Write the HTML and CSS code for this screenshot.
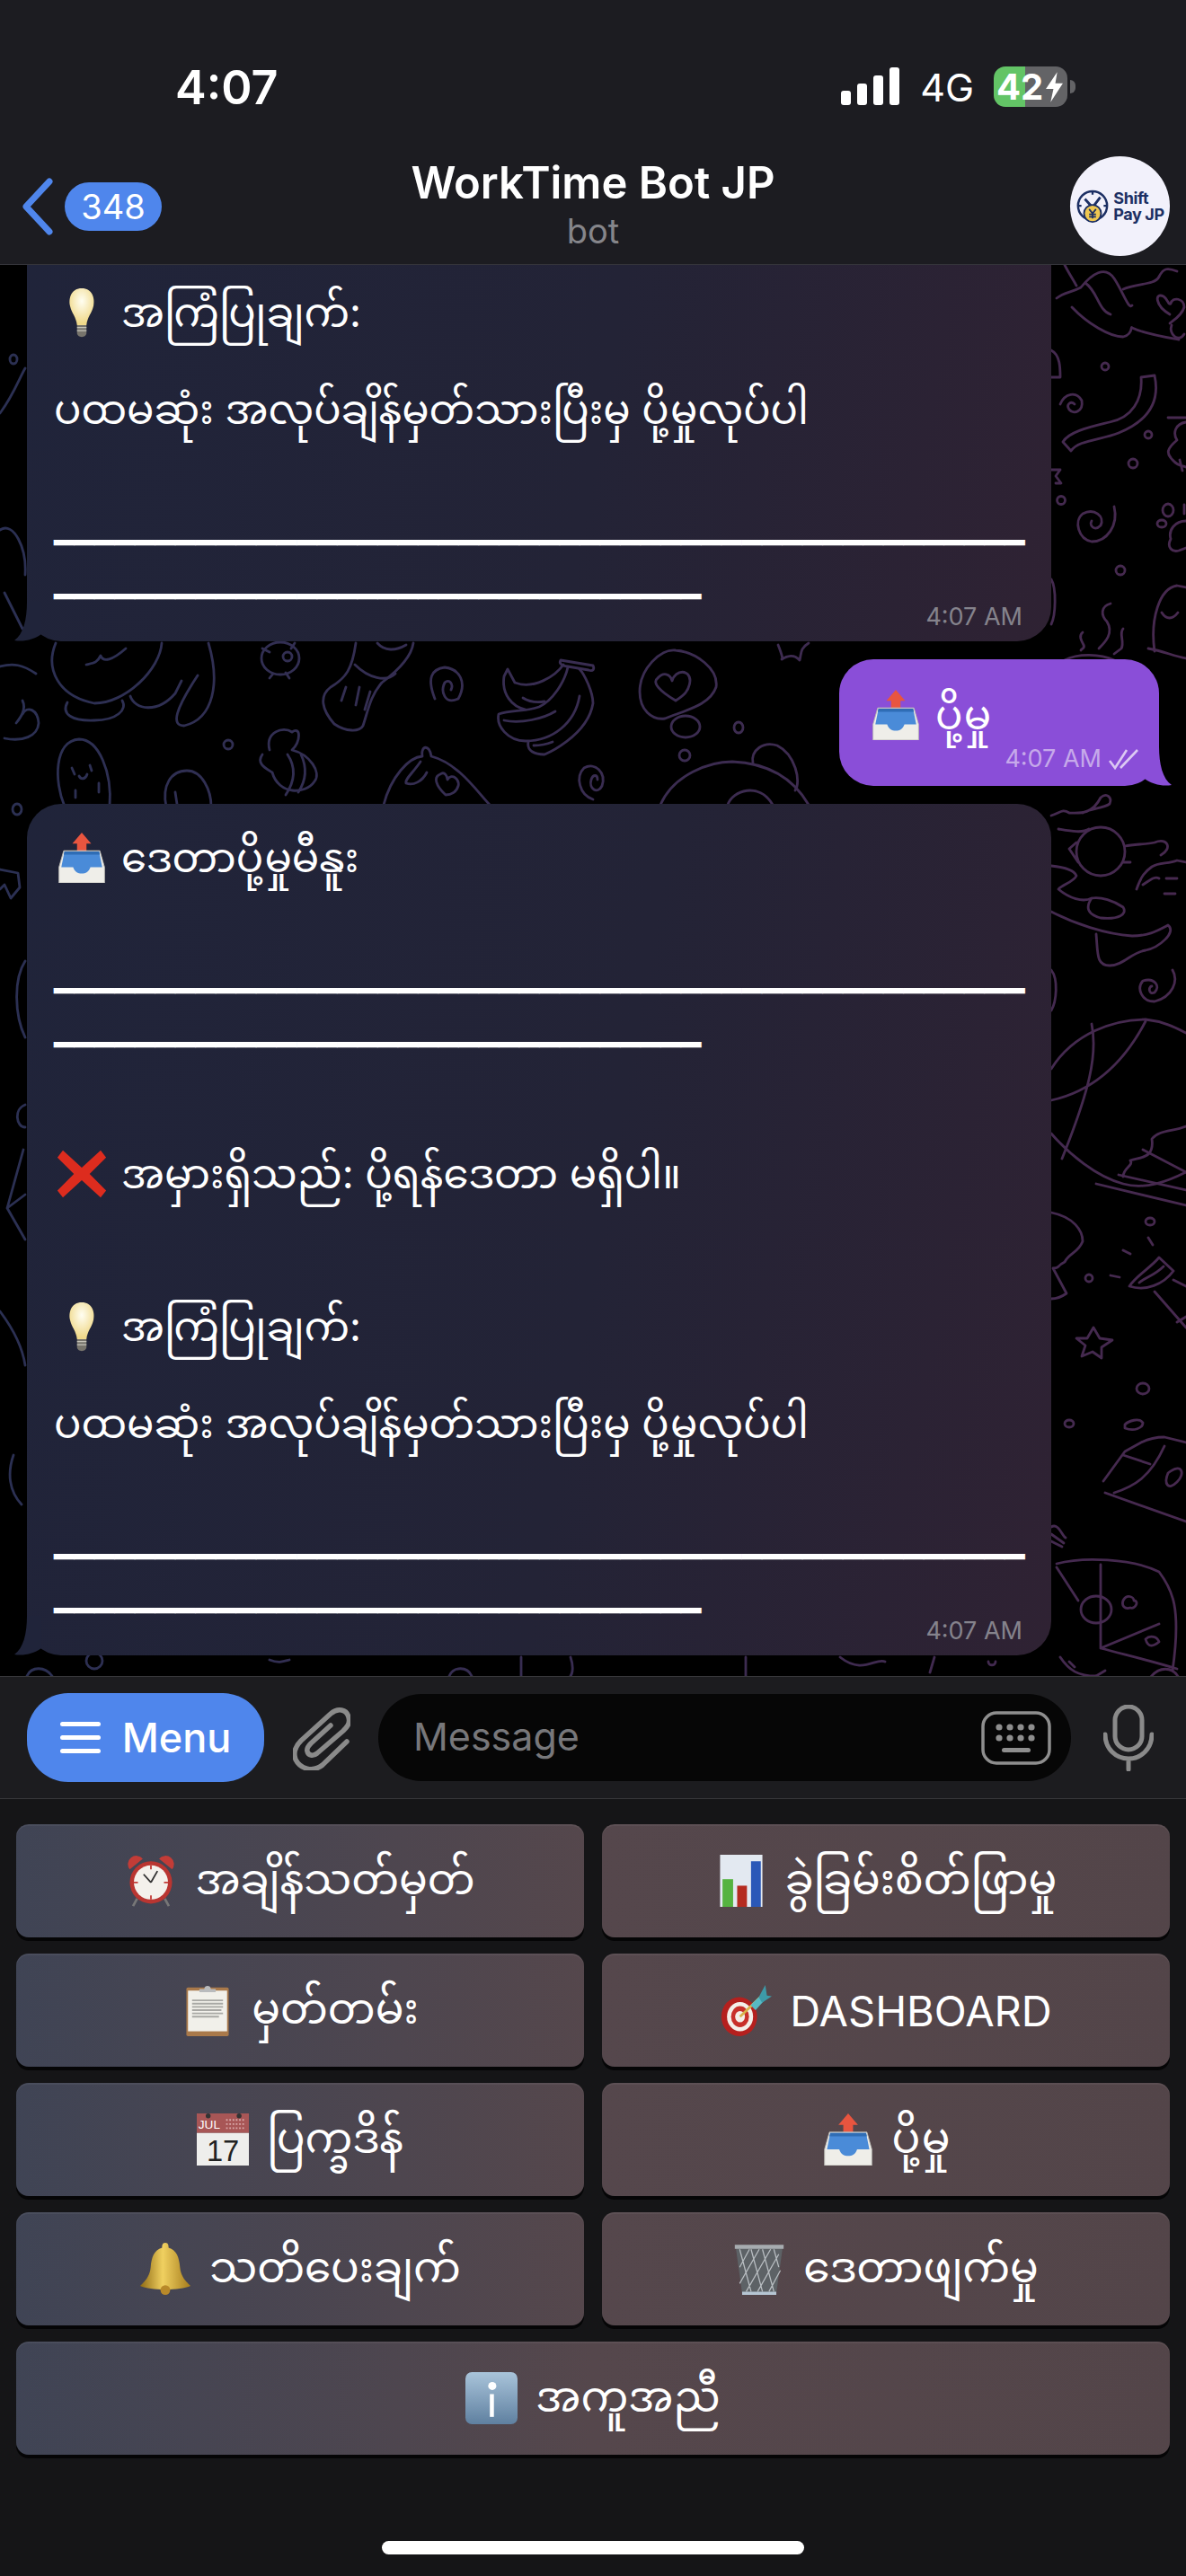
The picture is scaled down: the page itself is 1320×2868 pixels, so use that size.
FILE: index.html
```html
<!DOCTYPE html>
<html lang="my">
<head>
  <meta charset="UTF-8" />
  <meta name="viewport" content="width=device-width, initial-scale=1.0" />
  <title>WorkTime Bot JP</title>
  <link rel="stylesheet" href="styles.css">
</head>
<body>
  <!-- emoji drawn once, reused with <use> -->
  <svg class="defs" width="0" height="0">
    <defs>
      <linearGradient id="doodle" gradientUnits="userSpaceOnUse" x1="0" y1="0" x2="1320" y2="0">
        <stop offset="0" stop-color="#2b3053"/>
        <stop offset="1" stop-color="#47294f"/>
      </linearGradient>
      <radialGradient id="bulbGlow" cx="0.5" cy="0.35" r="0.6">
        <stop offset="0" stop-color="#fffef2"/>
        <stop offset="1" stop-color="#f0d98a"/>
      </radialGradient>
      <linearGradient id="bellGold" x1="0" y1="0" x2="1" y2="0">
        <stop offset="0" stop-color="#8f6a14"/>
        <stop offset="0.45" stop-color="#f0d060"/>
        <stop offset="1" stop-color="#a67c1c"/>
      </linearGradient>
      <linearGradient id="infoBlue" x1="0" y1="0" x2="0" y2="1">
        <stop offset="0" stop-color="#a9c4da"/>
        <stop offset="1" stop-color="#5f80a0"/>
      </linearGradient>
      <symbol id="inbox" viewBox="0 0 64 64">
        <path d="M32 0 44 14H38V25H26V14H20Z" fill="#e8553f"/>
        <path d="M3 44 9 23H55L61 44V64H3Z" fill="#efeee9" stroke="#b9b9b4"/>
        <path d="M10 24H54L58 44H43C41 50 37 52 32 52S23 50 21 44H6Z" fill="#4a8bd8"/>
        <path d="M10 24H54L55 28H9Z" fill="#2f6db5"/>
      </symbol>
      <symbol id="bulb" viewBox="0 0 64 64">
        <path d="M32 1C19 1 15 13 17 23 19 33 25 37 26 48H38C39 37 45 33 47 23 49 13 45 1 32 1Z" fill="url(#bulbGlow)"/>
        <path d="M26 48H38V58C38 61 35 63 32 63S26 61 26 58Z" fill="#77746c"/>
        <path d="M26 51H38M26 55H38" stroke="#c8c5bb" stroke-width="1.5"/>
      </symbol>
      <symbol id="cross" viewBox="0 0 64 64">
        <path d="M8 2 32 24 56 2 63 11 42 32 63 53 56 62 32 40 8 62 1 53 22 32 1 11Z" fill="#dd2c1e"/>
      </symbol>
      <symbol id="clock" viewBox="0 0 64 64">
        <path d="M6 18A10 10 0 0 1 22 5ZM58 18A10 10 0 0 0 42 5Z" fill="#c33c37"/>
        <path d="M15 54 10 63M49 54 54 63" stroke="#777" stroke-width="3"/>
        <circle cx="32" cy="34" r="26" fill="#b93531"/>
        <circle cx="32" cy="34" r="21" fill="#f4f1ec"/>
        <path d="M32 13V18M32 50V55M11 34H16M48 34H53" stroke="#c33c37" stroke-width="2"/>
        <path d="M32 34 23 24M32 34 40 20" stroke="#333" stroke-width="2" fill="none"/>
      </symbol>
      <symbol id="chart" viewBox="0 0 64 64">
        <rect x="6" y="0" width="52" height="64" fill="#e3e9f1"/>
        <rect x="9" y="30" width="13" height="34" fill="#55b340"/>
        <rect x="27" y="38" width="12" height="26" fill="#b52b20"/>
        <rect x="44" y="8" width="12" height="56" fill="#2a58b8"/>
      </symbol>
      <symbol id="clipboard" viewBox="0 0 64 64">
        <rect x="6" y="4" width="52" height="60" rx="2" fill="#a9794a"/>
        <rect x="8" y="8" width="48" height="50" fill="#f1f0ea"/>
        <path d="M13 20H51M13 24H51M13 28H51M13 32H49M13 36H51M13 40H46" stroke="#a8a8a4" stroke-width="2"/>
        <path d="M22 10V6H28C28 1 36 1 36 6H42V10Z" fill="#b9bbbd"/>
      </symbol>
      <symbol id="target" viewBox="0 0 64 64">
        <ellipse cx="24" cy="40" rx="22" ry="24" fill="#b5201e"/>
        <ellipse cx="25" cy="40" rx="16" ry="18" fill="#f4efe9"/>
        <ellipse cx="25" cy="40" rx="11" ry="13" fill="#c8302a"/>
        <ellipse cx="25" cy="40" rx="6" ry="7" fill="#f4efe9"/>
        <path d="M25 40 52 14" stroke="#d8b24a" stroke-width="3"/>
        <path d="M38 26 48 16 54 21 44 32Z" fill="#57b9c4"/>
        <path d="M48 16 56 1 58 14 64 15 52 23Z" fill="#3d9aa8"/>
      </symbol>
      <symbol id="calendar" viewBox="0 0 64 64">
        <rect x="0" y="0" width="64" height="24" fill="#a85656"/>
        <rect x="0" y="24" width="64" height="40" fill="#eeeeec"/>
        <text x="2" y="19" class="cal-month">JUL</text>
        <text x="12" y="58" class="cal-day">17</text>
        <path d="M36 8H60M36 13H60M36 18H60" stroke="#d9a9a9" stroke-width="2" stroke-dasharray="2 2"/>
        <circle cx="14" cy="3" r="3" fill="#333"/>
        <circle cx="52" cy="3" r="3" fill="#333"/>
      </symbol>
      <symbol id="bell" viewBox="0 0 64 64">
        <path d="M32 0C36 0 36 4 36 6 46 9 49 18 50 30 51 42 58 48 63 53 50 59 14 59 1 53 6 48 13 42 14 30 15 18 18 9 28 6 28 4 28 0 32 0Z" fill="url(#bellGold)"/>
        <circle cx="32" cy="58" r="6" fill="#b8892a"/>
      </symbol>
      <symbol id="trash" viewBox="0 0 64 64">
        <path d="M3 4H61L53 62H11Z" fill="#5d6266"/>
        <path d="M8 8 22 60M22 8 36 60M36 8 50 60M50 8 56 30M8 30 20 8M8 50 32 8M16 60 46 8M30 60 56 14M44 60 58 34" stroke="#b9bec2" stroke-width="1.4" fill="none"/>
        <path d="M2 5H62" stroke="#a7acb0" stroke-width="5"/>
        <path d="M11 62H53" stroke="#b6c6d3" stroke-width="4"/>
      </symbol>
      <symbol id="info" viewBox="0 0 64 64">
        <rect x="0" y="0" width="64" height="64" rx="8" fill="url(#infoBlue)"/>
        <circle cx="33" cy="17" r="5" fill="#fff"/>
        <rect x="30" y="27" width="5" height="28" fill="#fff"/>
      </symbol>
    </defs>
  </svg>

  <header class="top">
    <div class="status">
      <span class="clock">4:07</span>
      <div class="status-right">
        <svg class="signal" viewBox="0 0 65 42">
          <rect x="0" y="26" width="11" height="16" rx="3"/>
          <rect x="18" y="18" width="11" height="24" rx="3"/>
          <rect x="36" y="9" width="11" height="33" rx="3"/>
          <rect x="54" y="0" width="11" height="42" rx="3"/>
        </svg>
        <span class="net">4G</span>
        <div class="battery">
          <span class="battery-level">42</span>
          <svg class="bolt" viewBox="0 0 20 32"><path d="M13 0 1 18H9L6 32 19 12H11Z"/></svg>
        </div>
        <span class="battery-nub"></span>
      </div>
    </div>
    <div class="nav">
      <div class="back">
        <svg class="chevron" viewBox="0 0 36 64"><path d="M31 4 5 32 31 60"/></svg>
        <span class="badge">348</span>
      </div>
      <div class="title-box">
        <div class="title">WorkTime Bot JP</div>
        <div class="subtitle">bot</div>
      </div>
      <div class="avatar">
        <svg class="logo-mark" viewBox="0 0 40 40">
          <circle cx="20" cy="19" r="17" fill="none" stroke="#1c2f63" stroke-width="2.6"/>
          <path d="M20 2V6M20 32V36M3 19H7M33 19H37" stroke="#1c2f63" stroke-width="2.4"/>
          <path d="M11 11 20 21 29 9" fill="none" stroke="#1c2f63" stroke-width="3"/>
          <circle cx="20" cy="28" r="10" fill="#efc750" stroke="#1c2f63" stroke-width="2"/>
          <path d="M16 23 20 28 24 23M20 28V34M16 29H24M16 32H24" fill="none" stroke="#1c2f63" stroke-width="1.8"/>
        </svg>
        <div class="logo-text">Shift<br>Pay JP</div>
      </div>
    </div>
  </header>

  <main class="chat">
    <svg class="wallpaper" viewBox="0 0 1320 1571" width="1320" height="1571">
      <g transform="translate(0 -295)" fill="none" stroke="url(#doodle)" stroke-width="2.8" stroke-linecap="round" stroke-linejoin="round">
        <!-- band between first bubble and second -->
        <path d="M0 742C15 738 25 740 40 750"/>
        <path d="M25 795C30 785 42 790 43 805 42 820 25 826 5 822M25 780C30 790 22 800 18 805"/>
        <path d="M62 716C50 745 65 775 105 783 140 783 178 745 180 716"/>
        <path d="M75 782C68 795 80 803 105 802 130 802 142 790 136 780"/>
        <path d="M145 775C150 790 175 795 195 772L202 758"/>
        <path d="M232 716C245 760 238 800 205 808 190 808 195 790 220 752"/>
        <path d="M96 740C105 738 108 738 112 730 115 738 125 735 140 722"/>
        <ellipse cx="312" cy="733" rx="21" ry="18"/>
        <circle cx="320" cy="731" r="5"/>
        <path d="M292 722 300 726M328 716 324 722M300 755 304 750M322 755 318 749"/>
        <path d="M396 716C392 745 385 755 368 765 355 775 358 790 372 806 385 815 400 815 404 808 410 790 412 775 425 760 445 745 458 730 460 716"/>
        <path d="M395 740C410 755 430 760 440 750M385 765 380 780M400 765 396 785M412 770 406 790M420 716C428 725 440 725 452 718"/>
        <path d="M484 778C475 755 480 745 495 743 512 745 520 760 510 778 495 785 490 770 495 760 500 755 505 762 502 768"/>
        <path d="M624 735 660 741C662 745 660 748 655 746L632 742C624 741 622 738 624 735Z"/>
        <path d="M627 740C618 753 594 768 573 760L565 745 561 753C558 773 570 787 585 790"/>
        <path d="M632 743C628 760 615 780 600 787 582 793 570 790 555 795 552 808 565 825 585 825 615 825 640 805 645 775"/>
        <path d="M645 745C650 750 660 770 660 783 654 820 606 840 606 840 595 840 586 836 588 826"/>
        <path d="M582 777C590 782 600 782 606 781M561 802C580 806 605 800 618 792M594 830C600 830 610 828 615 826"/>
        <path d="M752 724C775 726 800 745 797 765 790 785 765 790 740 800 725 802 712 790 712 770 712 745 735 722 752 724Z"/>
        <path d="M752 780C735 770 725 760 732 755 738 748 746 750 748 758 752 745 768 745 768 758 767 770 760 775 752 780Z"/>
        <ellipse cx="763" cy="809" rx="16" ry="12"/>
        <ellipse cx="822" cy="810" rx="5" ry="6"/>
        <ellipse cx="762" cy="841" rx="6" ry="6"/>
        <path d="M866 718C870 728 872 735 870 734 876 730 884 728 890 735 892 728 890 722 900 716"/>
        <ellipse cx="254" cy="829" rx="5" ry="5"/>
        <path d="M72 898C60 870 60 825 88 823 110 823 125 860 122 898"/>
        <path d="M80 855 83 862M100 852 102 858M88 864C90 868 95 868 97 862M84 880V888M110 872V882"/>
        <path d="M185 898C180 875 190 858 208 858 225 858 235 880 235 898M195 882 197 895"/>
        <path d="M300 835C295 815 315 808 325 815 335 808 335 825 325 835 345 840 358 860 350 870 340 885 310 885 303 860 295 855 285 850 292 840 288 830 300 835Z"/>
        <path d="M320 840C330 855 328 870 318 885M335 840C342 855 340 870 332 882"/>
        <path d="M427 896C435 865 455 843 470 842 468 830 478 828 480 842 510 850 530 880 545 896"/>
        <path d="M468 848C460 860 450 868 452 872 460 875 470 870 475 860"/>
        <path d="M496 885C485 875 482 865 490 862 495 858 498 865 498 868 503 860 512 868 510 875 508 882 502 885 496 885Z"/>
        <path d="M660 890C645 885 640 865 650 855 662 848 675 860 670 875 665 885 655 878 658 868 660 862 665 862 665 868"/>
        <path d="M735 896C750 862 790 848 815 848 860 850 885 870 900 896"/>
        <path d="M810 896C815 880 845 870 860 896"/>
        <path d="M838 850C835 835 850 825 865 830 885 840 892 870 885 880"/>
        <!-- right of the first bubble -->
        <path d="M1185 295C1190 305 1195 312 1198 318M1176 332C1185 325 1192 326 1203 320 1215 305 1230 295 1240 310 1250 325 1256 345 1260 340"/>
        <path d="M1193 342C1210 360 1235 375 1250 375 1262 372 1258 362 1260 365 1275 372 1295 375 1312 378"/>
        <path d="M1208 315C1222 325 1222 345 1236 350M1250 322C1265 315 1285 318 1290 308 1295 298 1300 298 1310 302"/>
        <path d="M1302 350C1285 340 1285 325 1295 330 1300 333 1300 340 1303 338 1305 330 1318 332 1318 342 1315 352 1304 358 1302 360M1304 362C1300 372 1312 382 1318 372"/>
        <path d="M1170 390C1180 395 1180 410 1180 420H1170"/>
        <circle cx="1230" cy="408" r="4"/>
        <path d="M1270 420 1285 418C1292 450 1275 470 1245 482 1225 490 1200 490 1192 502L1183 492C1190 480 1215 475 1235 470 1260 465 1272 445 1270 420Z"/>
        <path d="M1180 450C1185 438 1198 435 1204 446 1206 458 1195 462 1190 456 1186 450 1192 446 1196 450"/>
        <circle cx="1278" cy="484" r="4"/>
        <circle cx="1261" cy="516" r="5"/>
        <path d="M1300 465H1320M1320 470C1308 472 1305 482 1310 490 1298 500 1298 505 1305 512 1312 520 1316 518 1320 520M1313 512 1316 524"/>
        <path d="M1170 523H1180L1175 530 1181 538H1175"/>
        <circle cx="1181" cy="557" r="4.5"/>
        <path d="M1240 564C1245 585 1232 603 1215 603 1200 600 1195 580 1205 572 1218 565 1230 575 1225 585 1218 592 1212 585 1215 580"/>
        <ellipse cx="1300" cy="568" rx="6" ry="7"/>
        <ellipse cx="1293" cy="583" rx="5" ry="4"/>
        <path d="M1320 580C1308 580 1300 590 1303 600 1298 610 1305 615 1312 613L1320 610M1318 562V572"/>
        <circle cx="1247" cy="635" r="5"/>
        <path d="M1170 645C1176 655 1175 685 1170 695"/>
        <path d="M1285 725C1280 690 1290 655 1310 652L1320 654M1293 682C1298 690 1305 690 1311 682M1278 722C1295 725 1305 730 1320 733"/>
        <path d="M1236 672C1225 675 1225 685 1232 692 1240 705 1230 715 1223 722M1205 704C1200 708 1204 714 1206 718 1208 722 1204 722 1203 724M1250 700C1245 705 1252 715 1248 722L1240 728"/>
        <path d="M1185 735C1200 727 1225 728 1240 735"/>
        <!-- right of the second bubble -->
        <path d="M1170 908C1180 905 1182 900 1190 905 1200 905 1215 908 1225 888 1232 882 1238 888 1235 895 1228 900 1215 900 1205 905"/>
        <ellipse cx="1225" cy="948" rx="27" ry="27"/>
        <path d="M1178 923C1190 925 1205 928 1212 923M1200 960 1190 945 1198 938M1252 942C1262 940 1275 940 1285 938 1300 932 1305 945 1292 952M1250 960H1258"/>
        <path d="M1170 964C1180 965 1195 968 1198 975 1195 982 1182 985 1178 990 1190 1000 1205 1005 1215 1000 1225 998 1240 1003 1250 1010 1255 1018 1245 1024 1225 1022 1210 1018 1208 1010 1215 1000"/>
        <path d="M1170 1015C1195 1028 1230 1040 1260 1042 1280 1042 1290 1035 1300 1030 1310 1038 1290 1055 1275 1058 1260 1060 1250 1075 1235 1075 1220 1075 1222 1062 1220 1040"/>
        <path d="M1265 990C1270 975 1275 970 1282 965 1290 960 1300 962 1310 958L1320 960M1272 985C1280 980 1285 975 1290 978M1298 978H1310M1296 995H1308"/>
        <path d="M1305 1080C1312 1092 1305 1110 1285 1115 1270 1115 1265 1100 1272 1092 1285 1088 1292 1098 1285 1105 1278 1108 1278 1098 1282 1098"/>
        <path d="M1170 1080C1178 1090 1176 1115 1170 1125"/>
        <path d="M1170 1190C1195 1150 1240 1135 1275 1135 1295 1137 1310 1145 1320 1150"/>
        <path d="M1215 1140C1222 1175 1212 1215 1182 1290M1170 1225C1215 1215 1250 1185 1275 1137"/>
        <path d="M1170 1262C1190 1285 1220 1310 1250 1318 1275 1325 1300 1315 1320 1305"/>
        <path d="M1220 1318 1320 1342M1245 1308 1320 1325M1272 1280 1320 1305"/>
        <path d="M1250 1310C1250 1300 1262 1298 1258 1292 1270 1288 1285 1290 1282 1268 1290 1258 1305 1260 1320 1254"/>
        <path d="M1170 1350C1195 1355 1205 1370 1205 1382 1200 1395 1190 1395 1185 1405 1175 1410 1180 1412 1172 1412L1187 1440C1180 1445 1175 1446 1170 1446"/>
        <ellipse cx="1280" cy="1360" rx="5" ry="4"/>
        <path d="M1278 1378 1283 1386M1250 1392 1258 1396M1236 1420 1246 1422"/>
        <ellipse cx="1212" cy="1423" rx="4" ry="4"/>
        <path d="M1257 1432C1265 1420 1280 1412 1290 1400L1306 1415C1295 1430 1275 1438 1257 1432ZM1268 1428C1275 1422 1285 1420 1295 1410M1285 1438 1320 1478M1306 1425 1320 1432M1310 1472 1320 1466"/>
        <path d="M1217 1478 1224 1490 1238 1492 1226 1500 1226 1512 1216 1505 1204 1510 1208 1498 1198 1490 1210 1490Z"/>
        <ellipse cx="1272" cy="1546" rx="7" ry="6"/>
        <ellipse cx="1190" cy="1585" rx="5" ry="4"/>
        <path d="M1252 1586C1256 1582 1268 1578 1272 1584 1272 1590 1262 1594 1252 1590Z"/>
        <path d="M1228 1649 1252 1616 1270 1606C1282 1600 1290 1600 1296 1600L1320 1606M1250 1620 1280 1630M1240 1662C1262 1655 1280 1645 1296 1610M1230 1662 1320 1694"/>
        <path d="M1300 1640C1315 1628 1320 1640 1310 1650 1300 1660 1295 1652 1300 1640Z"/>
        <path d="M1176 1745 1200 1782M1176 1741C1205 1733 1260 1735 1290 1750 1305 1770 1315 1790 1305 1860"/>
        <path d="M1225 1742V1835M1225 1835 1290 1808M1225 1835C1255 1843 1285 1850 1310 1858"/>
        <ellipse cx="1220" cy="1792" rx="17" ry="15"/>
        <path d="M1250 1782C1254 1774 1262 1778 1262 1782 1268 1782 1264 1792 1258 1790 1252 1792 1248 1788 1250 1782ZM1275 1825C1280 1820 1288 1822 1290 1828 1285 1832 1278 1836 1275 1825ZM1280 1868C1290 1855 1305 1855 1312 1868"/>
        <path d="M1170 1700C1178 1695 1182 1710 1186 1712M1170 1708 1184 1718M1170 1716 1182 1722"/>
        <path d="M1190 1850 1196 1856M1220 1866 1230 1860"/>
        <!-- left strip -->
        <ellipse cx="15" cy="400" rx="4" ry="5"/>
        <path d="M0 460C15 440 22 420 28 410M0 590C15 580 30 610 28 640M5 660 25 700"/>
        <ellipse cx="19" cy="901" rx="5" ry="6"/>
        <path d="M0 968 20 972 22 988 12 1000 5 985 0 990M28 1070C15 1090 16 1130 28 1155M28 1230C15 1235 18 1255 28 1255"/>
        <path d="M26 1280 8 1345 28 1380M8 1345 28 1330M0 1460C15 1480 25 1500 28 1520M15 1620C8 1640 10 1660 24 1675"/>
        <!-- strip under the second bubble -->
        <ellipse cx="105" cy="1849" rx="9" ry="9"/>
        <path d="M30 1866C35 1855 50 1855 58 1866M300 1848C310 1852 315 1850 322 1848M500 1866C505 1855 520 1855 525 1866M580 1845V1866M635 1845C640 1860 635 1866 635 1866M830 1845V1866M935 1845C960 1865 975 1845 985 1850M1040 1845 1035 1862M1100 1850C1100 1855 1108 1855 1108 1850M1180 1845C1190 1860 1200 1866 1220 1866"/>
      </g>
    </svg>

    <!-- the start of this message has scrolled under the top bar -->
    <article class="bubble in scrolled">
      <div class="line"><svg class="emoji"><use href="#bulb"/></svg><span>အကြံပြုချက်:</span></div>
      <div class="line gap-s">ပထမဆုံး အလုပ်ချိန်မှတ်သားပြီးမှ ပို့မှုလုပ်ပါ</div>
      <div class="rule gap-m">━━━━━━━━━━━━━━━━━━━━━━━━━━━━━━━━━━━━━━━━━━━━━━━━</div>
      <div class="rule">━━━━━━━━━━━━━━━━━━━━━━━━━━━━━━━━</div>
      <span class="time">4:07 AM</span>
    </article>

    <article class="bubble out">
      <div class="line"><svg class="emoji"><use href="#inbox"/></svg><span>ပို့မှု</span></div>
      <div class="meta">
        <span class="time-out">4:07 AM</span>
        <svg class="checks" viewBox="0 0 36 24"><path d="M1 14 7 22 20 2M13 22 32 2"/></svg>
      </div>
    </article>

    <article class="bubble in">
      <div class="line"><svg class="emoji"><use href="#inbox"/></svg><span>ဒေတာပို့မှုမီနူး</span></div>
      <div class="rule gap-m">━━━━━━━━━━━━━━━━━━━━━━━━━━━━━━━━━━━━━━━━━━━━━━━━</div>
      <div class="rule">━━━━━━━━━━━━━━━━━━━━━━━━━━━━━━━━</div>
      <div class="line gap-m"><svg class="emoji"><use href="#cross"/></svg><span>အမှားရှိသည်: ပို့ရန်ဒေတာ မရှိပါ။</span></div>
      <div class="line gap-l"><svg class="emoji"><use href="#bulb"/></svg><span>အကြံပြုချက်:</span></div>
      <div class="line gap-s">ပထမဆုံး အလုပ်ချိန်မှတ်သားပြီးမှ ပို့မှုလုပ်ပါ</div>
      <div class="rule gap-m">━━━━━━━━━━━━━━━━━━━━━━━━━━━━━━━━━━━━━━━━━━━━━━━━</div>
      <div class="rule">━━━━━━━━━━━━━━━━━━━━━━━━━━━━━━━━</div>
      <span class="time">4:07 AM</span>
    </article>
  </main>

  <section class="composer">
    <button class="menu-btn">
      <span class="burger"><i></i><i></i><i></i></span>
      <span>Menu</span>
    </button>
    <svg class="attach" viewBox="0 0 64 72"><path d="M60 40 33 66C22 75 8 70 3 60 0 52 3 45 9 39L42 9C50 2 60 4 62 13 64 20 60 24 56 28L27 53C22 57 17 55 16 51 15 48 17 45 20 42L42 22"/></svg>
    <div class="input">
      <span class="placeholder">Message</span>
      <svg class="kbd" viewBox="0 0 78 60">
        <rect x="2" y="2" width="74" height="56" rx="15" fill="none" stroke="#8e8e8e" stroke-width="3.5"/>
        <g fill="#8e8e8e">
          <circle cx="20" cy="18" r="3.6"/><circle cx="32" cy="18" r="3.6"/><circle cx="44" cy="18" r="3.6"/><circle cx="56" cy="18" r="3.6"/>
          <circle cx="20" cy="30" r="3.6"/><circle cx="32" cy="30" r="3.6"/><circle cx="44" cy="30" r="3.6"/><circle cx="56" cy="30" r="3.6"/>
          <rect x="23" y="41" width="32" height="5" rx="2.5"/>
        </g>
      </svg>
    </div>
    <svg class="mic" viewBox="0 0 56 74"><rect x="13" y="2" width="30" height="48" rx="15" fill="none"/><path d="M2 33C2 49 14 60 28 60S54 49 54 33M28 60V72" fill="none"/></svg>
  </section>

  <section class="keyboard">
    <div class="keys">
      <button class="key"><svg class="emoji big"><use href="#clock"/></svg><span>အချိန်သတ်မှတ်</span></button>
      <button class="key"><svg class="emoji big"><use href="#chart"/></svg><span>ခွဲခြမ်းစိတ်ဖြာမှု</span></button>
      <button class="key"><svg class="emoji big"><use href="#clipboard"/></svg><span>မှတ်တမ်း</span></button>
      <button class="key latin"><svg class="emoji big"><use href="#target"/></svg><span>DASHBOARD</span></button>
      <button class="key"><svg class="emoji big"><use href="#calendar"/></svg><span>ပြက္ခဒိန်</span></button>
      <button class="key"><svg class="emoji big"><use href="#inbox"/></svg><span>ပို့မှု</span></button>
      <button class="key"><svg class="emoji big"><use href="#bell"/></svg><span>သတိပေးချက်</span></button>
      <button class="key"><svg class="emoji big"><use href="#trash"/></svg><span>ဒေတာဖျက်မှု</span></button>
      <button class="key wide"><svg class="emoji big"><use href="#info"/></svg><span>အကူအညီ</span></button>
    </div>
    <div class="home-bar"></div>
  </section>
</body>
</html>
```

FILE: styles.css
```css
* {
  box-sizing: border-box;
}
body {
  margin: 0;
  width: 1320px;
  height: 2868px;
  overflow: hidden;
  display: flex;
  flex-direction: column;
  background-color: #151517;
  color: #fff;
  font-family: Inter, "Noto Sans Myanmar", "Noto Sans", sans-serif;
}
.defs {
  position: absolute;
}
.cal-month {
  font: 15px "Liberation Sans", sans-serif;
  fill: #fff;
}
.cal-day {
  font: 36px "Liberation Sans", sans-serif;
  fill: #222;
}

/* top bar */
.top {
  height: 295px;
  flex: none;
  background-color: #1c1c21;
  border-bottom: 1px solid #34343a;
}
.status {
  height: 174px;
  display: flex;
  justify-content: space-between;
  padding: 71px 123px 0 195px;
}
.clock {
  font-size: 52px;
  font-weight: 600;
  line-height: 54px;
}
.status-right {
  display: flex;
  align-items: flex-start;
  padding-top: 3px;
}
.signal {
  width: 65px;
  height: 42px;
  margin-top: 1px;
  fill: #fff;
}
.net {
  margin-left: 23px;
  font-size: 43px;
  line-height: 46px;
}
.battery {
  width: 82px;
  height: 45px;
  margin-left: 22px;
  display: flex;
  align-items: center;
  padding-left: 3px;
  border-radius: 13px;
  background: linear-gradient(90deg, #63c466 43%, #636366 43%);
}
.battery-level {
  font-size: 40px;
  font-weight: 700;
  line-height: 45px;
}
.bolt {
  width: 21px;
  height: 34px;
  margin-left: 2px;
  fill: #fff;
}
.battery-nub {
  width: 6px;
  height: 15px;
  margin: 15px 0 0 3px;
  border-radius: 0 8px 8px 0;
  background-color: #636366;
}
.nav {
  display: grid;
  grid-template-columns: 1fr auto 1fr;
  padding: 0 18px;
}
.back {
  display: flex;
  align-items: center;
  gap: 12px;
  margin-left: 6px;
}
.chevron {
  width: 36px;
  height: 64px;
  fill: none;
  stroke: #4f86ec;
  stroke-width: 7;
  stroke-linecap: round;
  stroke-linejoin: round;
}
.badge {
  width: 108px;
  height: 54px;
  border-radius: 27px;
  background-color: #4f86ec;
  font-size: 38px;
  line-height: 54px;
  text-align: center;
}
.title-box {
  text-align: center;
  padding-top: 2px;
}
.title {
  font-size: 49px;
  font-weight: 600;
  line-height: 56px;
}
.subtitle {
  color: #85858a;
  font-size: 38px;
  line-height: 50px;
}
.avatar {
  justify-self: end;
  width: 111px;
  height: 111px;
  border-radius: 50%;
  background-color: #f2f1fb;
  display: flex;
  align-items: center;
  justify-content: center;
  gap: 4px;
}
.logo-mark {
  width: 38px;
  height: 38px;
}
.logo-text {
  color: #1c2f63;
  font-size: 18px;
  font-weight: 700;
  line-height: 18px;
  letter-spacing: -0.4px;
}

/* messages */
.chat {
  position: relative;
  height: 1571px;
  flex: none;
  overflow: hidden;
  display: flex;
  flex-direction: column;
  justify-content: flex-end;
  gap: 20px;
  padding-bottom: 23px;
  background-color: #000;
}
.wallpaper {
  position: absolute;
  top: 0;
  left: 0;
}
.bubble {
  position: relative;
  flex: none;
  border-radius: 38px;
}
.bubble.in {
  width: 1140px;
  margin-left: 30px;
  padding: 30px 30px 22px;
  background: linear-gradient(100deg, #20243a 0%, #232336 55%, #2f2233 100%);
}
.bubble.in.scrolled {
  padding-top: 24px;
  border-radius: 0 0 38px 38px;
}
.bubble.in::before {
  content: "";
  position: absolute;
  left: -14px;
  bottom: 0;
  width: 30px;
  height: 44px;
  background-color: #20243a;
  clip-path: path("M14 0C14 20 10 36 0 43C10 45 22 42 30 36V0Z");
}
.bubble.out {
  align-self: flex-end;
  width: 356px;
  height: 141px;
  margin-right: 30px;
  padding: 32px 30px 0 32px;
  background-color: #8a4ed8;
}
.bubble.out::after {
  content: "";
  position: absolute;
  right: -14px;
  bottom: 0;
  width: 30px;
  height: 44px;
  background-color: #8a4ed8;
  clip-path: path("M16 0C16 20 20 36 30 43C20 45 8 42 0 36V0Z");
}
.line {
  display: flex;
  align-items: center;
  gap: 16px;
  height: 60px;
  font-size: 45px;
  line-height: 60px;
  white-space: nowrap;
}
.emoji {
  width: 56px;
  height: 56px;
  flex: none;
}
.line .emoji {
  margin-left: 3px;
}
.emoji.big {
  width: 58px;
  height: 58px;
}
.rule {
  height: 60px;
  color: #fff;
  font-family: "DejaVu Sans", sans-serif;
  font-size: 37.4px;
  line-height: 64px;
  white-space: nowrap;
}
.gap-s {
  margin-top: 48px;
}
.gap-m {
  margin-top: 86px;
}
.gap-l {
  margin-top: 110px;
}
.time {
  position: absolute;
  right: 32px;
  bottom: 11px;
  color: #85838c;
  font-size: 27px;
  line-height: 32px;
}
.meta {
  position: absolute;
  right: 20px;
  bottom: 14px;
  display: flex;
  align-items: center;
  gap: 8px;
}
.time-out {
  color: #c6a9ea;
  font-size: 27px;
  line-height: 32px;
}
.checks {
  width: 36px;
  height: 24px;
  fill: none;
  stroke: #dcc9f3;
  stroke-width: 2.6;
}

/* message input row */
.composer {
  height: 137px;
  flex: none;
  display: flex;
  align-items: center;
  padding: 0 36px 0 30px;
  background-color: #1c1c1f;
  border-top: 1px solid #38383b;
  border-bottom: 1px solid #38383b;
}
.menu-btn {
  width: 264px;
  height: 99px;
  border: none;
  border-radius: 46px;
  background-color: #4f86ec;
  color: #fff;
  display: flex;
  align-items: center;
  justify-content: center;
  gap: 24px;
  font-family: Inter, sans-serif;
  font-size: 45px;
  font-weight: 500;
}
.burger {
  display: flex;
  flex-direction: column;
  gap: 10px;
}
.burger i {
  display: block;
  width: 45px;
  height: 5px;
  border-radius: 3px;
  background-color: #fff;
}
.attach {
  width: 64px;
  height: 72px;
  margin-left: 32px;
  fill: none;
  stroke: #8a8a8a;
  stroke-width: 5.5;
  stroke-linecap: round;
}
.input {
  width: 771px;
  height: 97px;
  margin-left: 31px;
  display: flex;
  align-items: center;
  justify-content: space-between;
  padding: 0 22px 0 39px;
  border-radius: 48px;
  background-color: #060606;
}
.placeholder {
  color: #77777a;
  font-size: 43px;
  padding-bottom: 4px;
}
.kbd {
  width: 78px;
  height: 60px;
}
.mic {
  width: 56px;
  height: 74px;
  margin-left: 36px;
  stroke: #8a8a8a;
  stroke-width: 5;
  stroke-linecap: round;
}

/* bot keyboard */
.keyboard {
  flex: 1;
  padding: 28px 18px 0;
  background-color: #151517;
}
.keys {
  display: grid;
  grid-template-columns: 1fr 1fr;
  gap: 18px 20px;
}
.key {
  height: 126px;
  border: none;
  border-radius: 14px;
  display: flex;
  align-items: center;
  justify-content: center;
  gap: 20px;
  color: #fff;
  font-family: Inter, "Noto Sans Myanmar", sans-serif;
  font-size: 47px;
  background: linear-gradient(90deg, #3f4455 0, #55474c 660px, #534549 1320px) fixed;
  box-shadow: inset 0 2px 0 rgba(255, 255, 255, 0.05), 0 4px 0 #050506;
}
.key span {
  padding-top: 8px;
}
.key.latin span {
  padding-top: 0;
}
.key.wide {
  grid-column: span 2;
}
.home-bar {
  width: 470px;
  height: 15px;
  margin: 96px auto 0;
  border-radius: 8px;
  background-color: #fff;
}
```
